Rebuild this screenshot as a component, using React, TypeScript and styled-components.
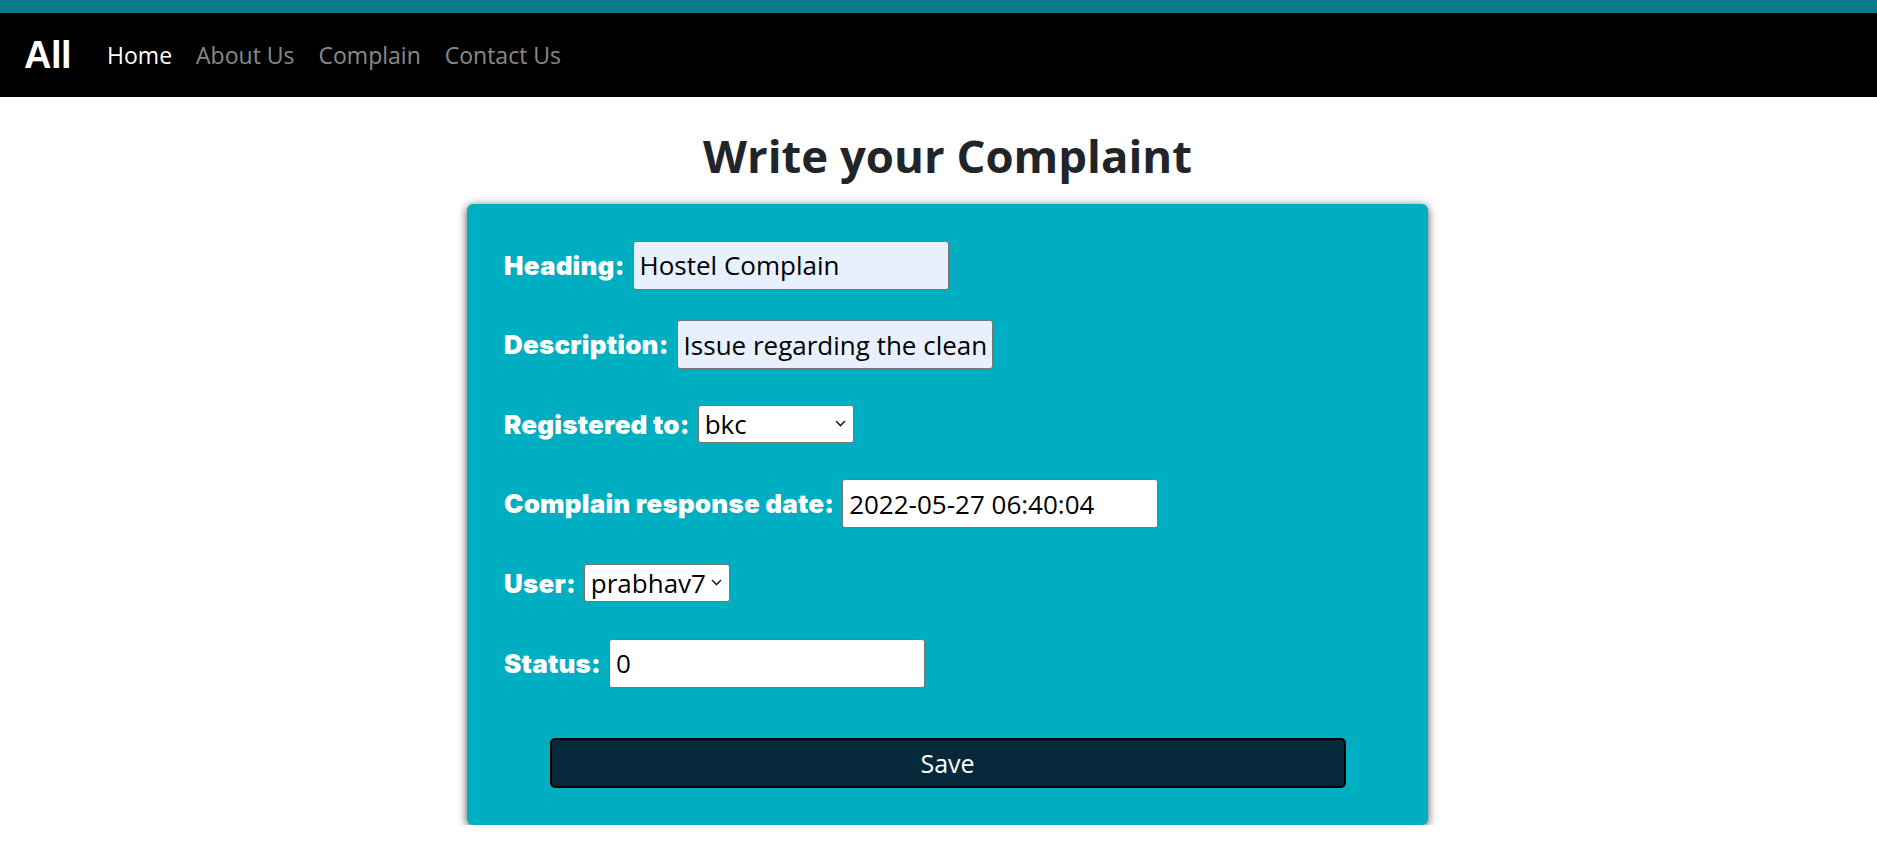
import React from "react";
import styled, { createGlobalStyle } from "styled-components";

const GlobalStyle = createGlobalStyle`
  * { box-sizing: border-box; }
  body {
    margin: 0;
    background: #ffffff;
    font-family: "Open Sans", "Noto Sans", sans-serif;
    color: #212529;
  }
`;

const TopStrip = styled.div`
  height: 13px;
  background: #077b8a;
`;

const NavBar = styled.nav`
  height: 84px;
  background: #000000;
  display: flex;
  align-items: center;
  padding-left: 24px;
`;

const Brand = styled.a`
  font-family: "Liberation Sans", Arial, sans-serif;
  font-weight: 700;
  font-size: 38px;
  color: #ffffff;
  text-decoration: none;
  margin-right: 24px;
  letter-spacing: -0.5px;
`;

const NavLink = styled.a<{ $active?: boolean }>`
  font-family: "Open Sans", "Noto Sans", sans-serif;
  font-size: 23px;
  padding: 0 12px;
  color: ${(p) => (p.$active ? "#ffffff" : "rgba(255,255,255,0.55)")};
  text-decoration: none;
  cursor: pointer;
`;

const Main = styled.main`
  padding-left: 18px;
  text-align: center;
`;

const Title = styled.h1`
  font-family: "Open Sans", "Noto Sans", sans-serif;
  font-weight: 700;
  font-size: 45.5px;
  line-height: 1.2;
  margin: 31px 0 21px;
  color: #212529;
`;

const Card = styled.form`
  width: 961px;
  margin: 0 auto;
  padding: 37px;
  background: #00aec2;
  border-radius: 6px;
  box-shadow: 0 2px 10px rgba(0, 0, 0, 0.7);
  text-align: left;
  display: flex;
  flex-direction: column;
`;

const Fields = styled.div`
  display: flex;
  flex-direction: column;
  gap: 30.6px;
`;

const Row = styled.div`
  display: flex;
  align-items: center;
  height: 49px;
`;

const Label = styled.label`
  font-family: "Inter", "Lato", sans-serif;
  font-weight: 900;
  font-size: 26px;
  letter-spacing: 0.2px;
  color: #ffffff;
  margin-right: 8px;
  white-space: nowrap;
`;

const TextInput = styled.input<{ $filled?: boolean }>`
  width: 316px;
  height: 49px;
  border: 1px solid #767676;
  border-radius: 3px;
  padding: 0 6px;
  font-family: "Open Sans", "Noto Sans", sans-serif;
  font-size: 26px;
  color: #000000;
  background: ${(p) => (p.$filled ? "#e8f0fe" : "#ffffff")};
  outline: none;
`;

const SelectWrap = styled.div`
  position: relative;
  display: inline-flex;
`;

const Select = styled.select<{ $w: number }>`
  appearance: none;
  -webkit-appearance: none;
  width: ${(p) => p.$w}px;
  height: 38px;
  border: 1px solid #767676;
  border-radius: 3px;
  padding: 0 0 0 6px;
  font-family: "Open Sans", "Noto Sans", sans-serif;
  font-size: 26px;
  line-height: 36px;
  color: #000000;
  background: #ffffff;
  outline: none;
`;

const Chevron = styled.svg`
  position: absolute;
  right: 8px;
  top: 50%;
  margin-top: -4px;
  width: 11px;
  height: 7px;
  pointer-events: none;
`;

const SaveButton = styled.button`
  width: 796px;
  height: 50px;
  margin: 50px auto 0;
  background: #05293a;
  border: 2px solid #000000;
  border-radius: 5px;
  color: #ffffff;
  font-family: "Open Sans", "Noto Sans", sans-serif;
  font-size: 25px;
  cursor: pointer;
`;

const Dropdown: React.FC<{ width: number; value: string }> = ({ width, value }) => (
  <SelectWrap>
    <Select $w={width} defaultValue={value}>
      <option value={value}>{value}</option>
    </Select>
    <Chevron viewBox="0 0 11 7" fill="none">
      <path d="M1 1l4.5 4.5L10 1" stroke="#222" strokeWidth="1.6" />
    </Chevron>
  </SelectWrap>
);

export default function App() {
  return (
    <>
      <GlobalStyle />
      <TopStrip />
      <NavBar>
        <Brand>All</Brand>
        <NavLink $active>Home</NavLink>
        <NavLink>About Us</NavLink>
        <NavLink>Complain</NavLink>
        <NavLink>Contact Us</NavLink>
      </NavBar>
      <Main>
        <Title>Write your Complaint</Title>
        <Card onSubmit={(e) => e.preventDefault()}>
          <Fields>
            <Row>
              <Label>Heading:</Label>
              <TextInput $filled defaultValue="Hostel Complain" />
            </Row>
            <Row>
              <Label>Description:</Label>
              <TextInput $filled defaultValue="Issue regarding the cleaning of hostel" />
            </Row>
            <Row>
              <Label>Registered to:</Label>
              <Dropdown width={156} value="bkc" />
            </Row>
            <Row>
              <Label>Complain response date:</Label>
              <TextInput defaultValue="2022-05-27 06:40:04" />
            </Row>
            <Row>
              <Label>User:</Label>
              <Dropdown width={146} value="prabhav7" />
            </Row>
            <Row>
              <Label>Status:</Label>
              <TextInput defaultValue="0" />
            </Row>
          </Fields>
          <SaveButton type="submit">Save</SaveButton>
        </Card>
      </Main>
    </>
  );
}
